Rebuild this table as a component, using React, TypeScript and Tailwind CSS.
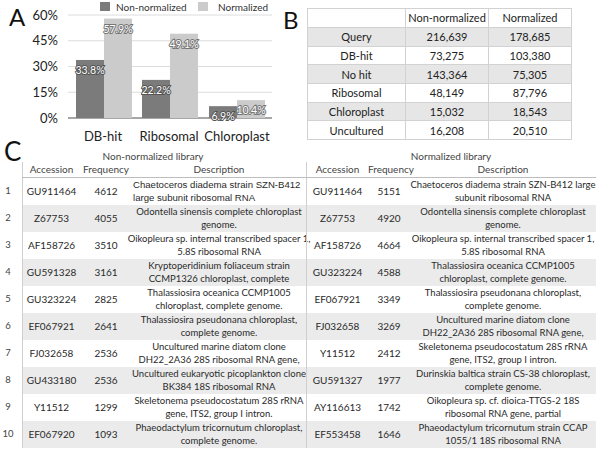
const DARK = "#7b7b7b";
const LIGHT = "#cbcbcb";

const bars = [
  { x: 76, dark: 33.8, light: 57.9 },
  { x: 142, dark: 22.2, light: 49.1 },
  { x: 209, dark: 6.9, light: 10.4 },
];

const BASE = 118;
const PX = 103 / 60;

function Chart() {
  const ticks = [0, 15, 30, 45, 60];
  return (
    <svg width={253} height={145} viewBox="30 0 253 145" className="block overflow-visible">
      {ticks.map((t) => {
        const y = BASE - t * PX;
        return (
          <g key={t}>
            <line x1={68} x2={272} y1={y} y2={y} stroke={t === 0 ? "#8a8a8a" : "#dcdcdc"} strokeWidth={t === 0 ? 1.5 : 1} />
            <text x={58} y={y + 4.5} textAnchor="end" fontSize={13} fill="#222">
              {t}%
            </text>
          </g>
        );
      })}
      {bars.map((b) => {
        const hd = b.dark * PX;
        const hl = b.light * PX;
        return (
          <g key={b.x}>
            <rect x={b.x} y={BASE - hd} width={28} height={hd} fill={DARK} />
            <rect x={b.x + 28} y={BASE - hl} width={28} height={hl} fill={LIGHT} />
            <text x={b.x + 14} y={BASE - hd + 14} textAnchor="middle" fontSize={10.5} fill="#fff" stroke="#555" strokeWidth={2} paintOrder="stroke">
              {b.dark}%
            </text>
            <text x={b.x + 42} y={BASE - hl + 14} textAnchor="middle" fontSize={10.5} fill="#fff" stroke="#777" strokeWidth={2} paintOrder="stroke">
              {b.light}%
            </text>
          </g>
        );
      })}
      <rect x={100} y={2} width={10} height={9} fill={DARK} />
      <text x={116} y={11} fontSize={10} fill="#333">Non-normalized</text>
      <rect x={198} y={2} width={10} height={9} fill={LIGHT} />
      <text x={218} y={11} fontSize={10} fill="#333">Normalized</text>
      <text x={103} y={141} textAnchor="middle" fontSize={13} fill="#222">DB-hit</text>
      <text x={169} y={141} textAnchor="middle" fontSize={13} fill="#222">Ribosomal</text>
      <text x={237} y={141} textAnchor="middle" fontSize={13} fill="#222">Chloroplast</text>
    </svg>
  );
}

const counts = [
  ["Query", "216,639", "178,685"],
  ["DB-hit", "73,275", "103,380"],
  ["No hit", "143,364", "75,305"],
  ["Ribosomal", "48,149", "87,796"],
  ["Chloroplast", "15,032", "18,543"],
  ["Uncultured", "16,208", "20,510"],
];

function CountTable() {
  return (
    <table className="table-fixed border-collapse w-[264px] text-[11px] text-[#222]">
      <tbody>
        <tr className="h-[19px]">
          <td className="w-[98px] border border-[#d2d2d2]"></td>
          <td className="w-[83px] border border-[#d2d2d2] text-center">Non-normalized</td>
          <td className="w-[83px] border border-[#d2d2d2] text-center">Normalized</td>
        </tr>
        {counts.map((r, i) => (
          <tr key={r[0]} className={i % 2 === 0 ? "h-[18.7px] bg-[#e6e6e6]" : "h-[18.7px] bg-white"}>
            {r.map((c, j) => (
              <td key={j} className="border border-[#d2d2d2] text-center leading-none">
                {c}
              </td>
            ))}
          </tr>
        ))}
      </tbody>
    </table>
  );
}

type Row = [string, string, string, string];

const left: Row[] = [
  ["GU911464", "4612", "Chaetoceros diadema strain SZN-B412", "large subunit ribosomal RNA"],
  ["Z67753", "4055", "Odontella sinensis complete chloroplast", "genome."],
  ["AF158726", "3510", "Oikopleura sp. internal transcribed spacer 1,", "5.8S ribosomal RNA"],
  ["GU591328", "3161", "Kryptoperidinium foliaceum strain", "CCMP1326 chloroplast, complete"],
  ["GU323224", "2825", "Thalassiosira oceanica CCMP1005", "chloroplast, complete genome."],
  ["EF067921", "2641", "Thalassiosira pseudonana chloroplast,", "complete genome."],
  ["FJ032658", "2536", "Uncultured marine diatom clone", "DH22_2A36 28S ribosomal RNA gene,"],
  ["GU433180", "2536", "Uncultured eukaryotic picoplankton clone", "BK384 18S ribosomal RNA"],
  ["Y11512", "1299", "Skeletonema pseudocostatum 28S rRNA", "gene, ITS2, group I intron."],
  ["EF067920", "1093", "Phaeodactylum tricornutum chloroplast,", "complete genome."],
];

const right: Row[] = [
  ["GU911464", "5151", "Chaetoceros diadema strain SZN-B412 large", "subunit ribosomal RNA"],
  ["Z67753", "4920", "Odontella sinensis complete chloroplast", "genome."],
  ["AF158726", "4664", "Oikopleura sp. internal transcribed spacer 1,", "5.8S ribosomal RNA"],
  ["GU323224", "4588", "Thalassiosira oceanica CCMP1005", "chloroplast, complete genome."],
  ["EF067921", "3349", "Thalassiosira pseudonana chloroplast,", "complete genome."],
  ["FJ032658", "3269", "Uncultured marine diatom clone", "DH22_2A36 28S ribosomal RNA gene,"],
  ["Y11512", "2412", "Skeletonema pseudocostatum 28S rRNA", "gene, ITS2, group I intron."],
  ["GU591327", "1977", "Durinskia baltica strain CS-38 chloroplast,", "complete genome."],
  ["AY116613", "1742", "Oikopleura sp. cf. dioica-TTGS-2 18S", "ribosomal RNA gene, partial"],
  ["EF553458", "1646", "Phaeodactylum tricornutum strain CCAP", "1055/1 18S ribosomal RNA"],
];

const GRID = "grid grid-cols-[58px_52px_174px_62px_42px_186px]";

function Desc({ lines, arial }: { lines: [string, string]; arial?: boolean }) {
  if (arial) {
    return (
      <div className="flex flex-col justify-center pl-[1px] font-['Liberation_Sans'] text-[9.6px] leading-[12.5px] whitespace-nowrap">
        <span>{lines[0]}</span>
        <span>{lines[1]}</span>
      </div>
    );
  }
  return (
    <div className="flex flex-col justify-center items-center text-[9.5px] leading-[12.5px] whitespace-nowrap">
      <span>{lines[0]}</span>
      <span>{lines[1]}</span>
    </div>
  );
}

function LibraryTable() {
  return (
    <div className="text-[#2a2a2a]">
      <div className="flex h-[22px]">
        <div className="w-[306px] flex items-end">
          <span className="w-[22px] pl-[4px] text-[26px] leading-[22px] text-[#111]">C</span>
          <span className="flex-1 pr-[22px] text-center text-[10px] leading-[12px] text-[#444]">Non-normalized library</span>
        </div>
        <div className="w-[290px] flex items-end justify-center">
          <span className="text-[10px] leading-[12px] text-[#444]">Normalized library</span>
        </div>
      </div>
      <div className="flex h-[16px]">
        <div className="w-[22px]" />
        <div className={`${GRID} border-b border-[#bdbdbd] text-[10px] text-[#444] items-center`}>
          <div className="h-full flex items-center justify-center border-l border-[#cfcfcf]">Accession</div>
          <div className="text-center">Frequency</div>
          <div className="text-center">Description</div>
          <div className="h-full flex items-center justify-center border-l border-[#cfcfcf]">Accession</div>
          <div className="text-center">Frequency</div>
          <div className="text-center">Description</div>
        </div>
      </div>
      {left.map((l, i) => {
        const r = right[i];
        return (
          <div key={i} className="flex h-[27px]">
            <div className="w-[22px] flex items-center justify-center pr-[6px] text-[9.5px] text-[#444]">{i + 1}</div>
            <div className={`${GRID} ${i % 2 === 1 ? "bg-[#ebebeb]" : "bg-white"} text-[10px]`}>
              <div className="flex items-center justify-center border-l border-[#cfcfcf]">{l[0]}</div>
              <div className="flex items-center justify-center">{l[1]}</div>
              <Desc lines={[l[2], l[3]]} arial={i === 0} />
              <div className="flex items-center justify-center border-l border-[#cfcfcf]">{r[0]}</div>
              <div className="flex items-center justify-center">{r[1]}</div>
              <Desc lines={[r[2], r[3]]} />
            </div>
          </div>
        );
      })}
    </div>
  );
}

export default function App() {
  return (
    <div className="w-[600px] h-[450px] overflow-hidden bg-white font-['Lato',sans-serif]">
      <div className="flex h-[140px]">
        <div className="flex w-[283px]">
          <span className="w-[30px] pl-[9px] pt-[5px] text-[24px] leading-[24px] text-[#111]">A</span>
          <Chart />
        </div>
        <span className="w-[24px] pt-[8px] text-[24px] leading-[24px] text-[#111]">B</span>
        <div className="pt-[8px]">
          <CountTable />
        </div>
      </div>
      <LibraryTable />
    </div>
  );
}
